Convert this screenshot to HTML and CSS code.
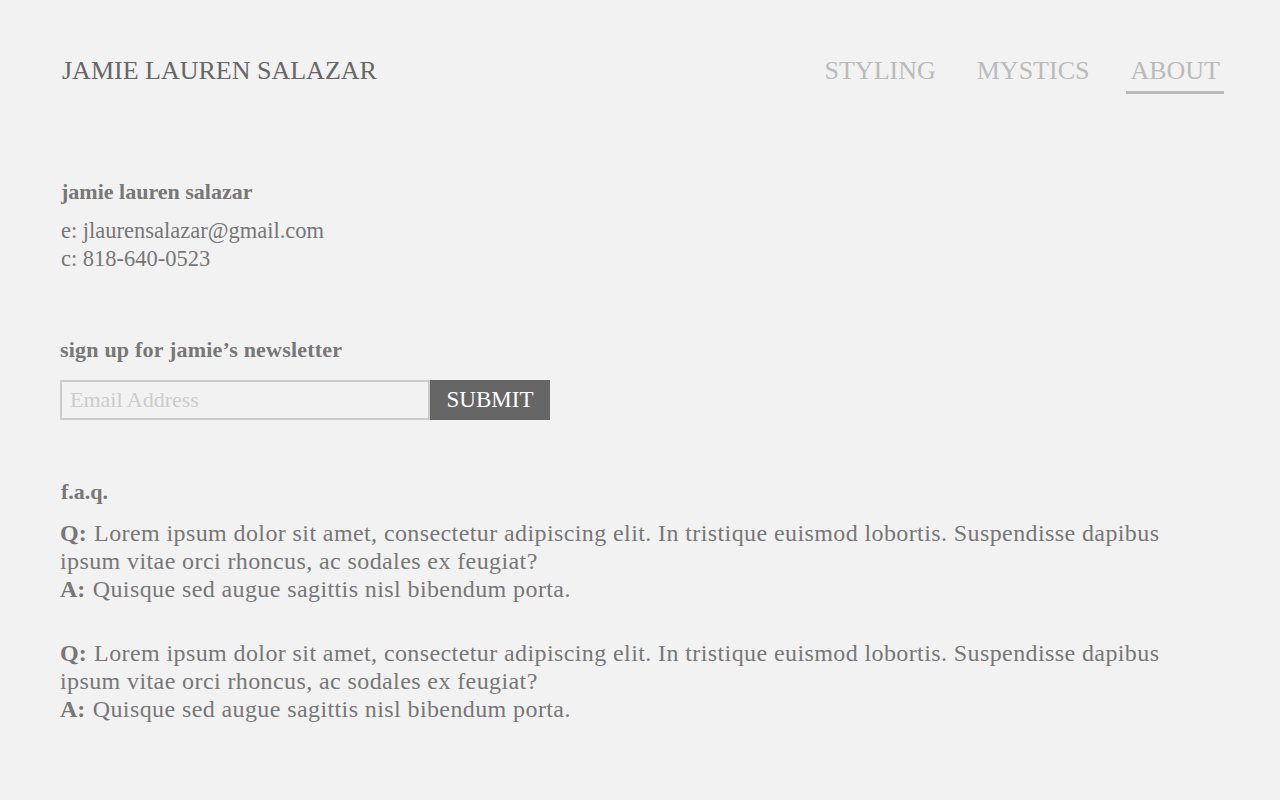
FILE: index.html
```html
<!DOCTYPE html>
<html>
<head>
<meta charset="utf-8">
<link rel="stylesheet" href="styles.css">
</head>
<body>
<header class="top">
  <div class="brand">JAMIE LAUREN SALAZAR</div>
  <nav class="nav">
    <a class="nav-link">STYLING</a>
    <a class="nav-link">MYSTICS</a>
    <a class="nav-link active">ABOUT</a>
  </nav>
</header>
<main class="content">
  <section class="contact">
    <h2 class="heading">jamie lauren salazar</h2>
    <p class="lines">e: jlaurensalazar@gmail.com<br>c: 818-640-0523</p>
  </section>
  <section class="news">
    <h2 class="heading">sign up for jamie’s newsletter</h2>
    <form class="form">
      <input class="email" type="text" placeholder="Email Address">
      <button class="submit" type="button">SUBMIT</button>
    </form>
  </section>
  <section class="faq">
    <h2 class="heading">f.a.q.</h2>
    <p class="qa"><b class="tag">Q:</b> Lorem ipsum dolor sit amet, consectetur adipiscing elit. In tristique euismod lobortis. Suspendisse dapibus ipsum vitae orci rhoncus, ac sodales ex feugiat?<br><b class="tag">A:</b> Quisque sed augue sagittis nisl bibendum porta.</p>
    <p class="qa"><b class="tag">Q:</b> Lorem ipsum dolor sit amet, consectetur adipiscing elit. In tristique euismod lobortis. Suspendisse dapibus ipsum vitae orci rhoncus, ac sodales ex feugiat?<br><b class="tag">A:</b> Quisque sed augue sagittis nisl bibendum porta.</p>
  </section>
</main>
</body>
</html>
```

FILE: styles.css
```css
html, body {
  margin: 0;
  padding: 0;
  background: #f2f2f2;
  font-family: "Liberation Serif", serif;
  color: #777;
}
.top {
  display: flex;
  justify-content: space-between;
  align-items: flex-start;
  padding: 54px 56px 0 62px;
}
.brand {
  font-size: 26px;
  color: #666;
  line-height: 34px;
}
.nav {
  display: flex;
  gap: 33px;
}
.nav-link {
  font-size: 26px;
  line-height: 34px;
  color: #bbb;
  padding: 0 4px 3px;
  border-bottom: 3px solid transparent;
}
.nav-link.active {
  border-bottom-color: #bbb;
}
.content {
  padding: 84px 60px 40px 61px;
}
.heading {
  margin: 0;
  font-size: 22px;
  font-weight: bold;
  color: #777;
  line-height: 28px;
}
.lines {
  margin: 11px 0 0;
  font-size: 22.5px;
  line-height: 28px;
  color: #777;
}
.news {
  margin-top: 63px;
}
.news .heading {
  margin-left: -1px;
  letter-spacing: 0.2px;
}
.form {
  display: flex;
  margin-top: 16px;
  margin-left: -1px;
}
.email {
  width: 370px;
  height: 40px;
  box-sizing: border-box;
  border: 2px solid #ccc;
  background: #f2f2f2;
  font-family: "Liberation Serif", serif;
  font-size: 22px;
  padding: 0 8px;
  color: #777;
  outline: none;
}
.email::placeholder {
  color: #ccc;
}
.submit {
  width: 120px;
  height: 40px;
  border: 0;
  background: #666;
  color: #fff;
  font-family: "Liberation Serif", serif;
  font-size: 23px;
  padding: 0;
}
.faq {
  margin-top: 58px;
}
.qa {
  max-width: 1140px;
  margin: 13px 0 0 -1px;
  font-size: 24px;
  letter-spacing: 0.4px;
  line-height: 28px;
  color: #777;
}
.qa + .qa {
  margin-top: 36px;
}
.tag {
  letter-spacing: 0;
  margin-right: 1px;
}
```
